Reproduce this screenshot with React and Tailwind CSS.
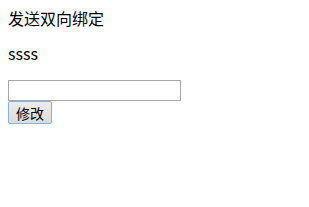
import React, { useState } from "react";

const FONT = "font-['Microsoft_YaHei','Noto_Sans_CJK_SC',sans-serif]";

export default function App() {
    const [msg, setMsg] = useState("");

    return (
        <div className={`bg-white w-[309px] h-[207px] p-2 text-black ${FONT}`}>
            <div className="text-[16px] leading-[20px]">发送双向绑定</div>

            <p className="mt-[15px] mb-[16px] text-[16px] leading-[21px]">ssss</p>

            <div className="flex flex-col items-start">
                <input
                    type="text"
                    value={msg}
                    onChange={(e) => setMsg(e.target.value)}
                    className="w-[173px] h-[21px] border border-[#a9a9a9] bg-white outline-none px-1 text-[13px]"
                />
                <button className="h-[23px] px-[7px] border border-[#7eb4ea] rounded-[2px] bg-gradient-to-b from-[#ececec] to-[#dcdcdc] text-[14px] leading-none text-black">
                    修改
                </button>
            </div>
        </div>
    );
}
